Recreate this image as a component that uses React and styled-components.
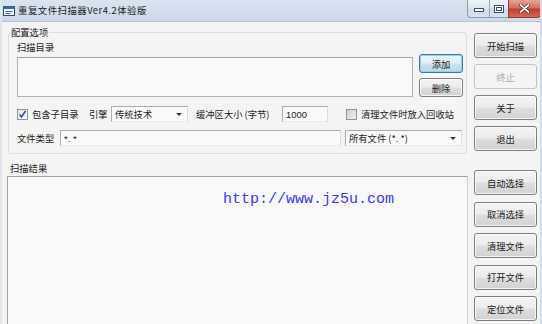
import React from "react";
import styled, { createGlobalStyle, css } from "styled-components";

const GlobalStyle = createGlobalStyle`
  html, body { margin: 0; padding: 0; background: #f4f4f4; }
  body { width: 542px; height: 324px; overflow: hidden; font-family: "Noto Sans CJK SC", "Noto Sans", sans-serif; }
  * { box-sizing: border-box; }
`;

const Window = styled.div`
  width: 542px;
  height: 324px;
  overflow: hidden;
  background: #f4f4f4;
  border-left: 2px solid #dfe6ee;
  border-right: 2px solid #d3dce7;
  display: flex;
  flex-direction: column;
`;

const TitleBar = styled.div`
  height: 22px;
  flex: none;
  display: flex;
  align-items: flex-start;
  background: linear-gradient(to bottom, #dae4f0 0%, #d2deec 55%, #ccd9e9 100%);
  border-bottom: 1px solid #b9c6d6;
  margin: 0 -2px;
  padding-left: 3px;
`;

const AppIcon = styled.svg`
  width: 12px;
  height: 12px;
  margin-top: 5px;
  flex: none;
`;

const Title = styled.div`
  margin-left: 3px;
  margin-top: 4px;
  font-size: 9.4px;
  line-height: 13px;
  color: #1c1c1c;
  letter-spacing: 0.5px;
  white-space: nowrap;
`;

const Controls = styled.div`
  margin-left: auto;
  display: flex;
  align-items: flex-start;
  padding-right: 1px;
`;

const CtrlGroup = styled.div`
  display: flex;
  height: 18px;
  border: 1px solid #8d9db1;
  border-top: none;
  border-right: none;
  border-bottom-left-radius: 4px;
  background: linear-gradient(to bottom, #eef3f8 0%, #dce5ef 50%, #cdd9e6 51%, #d9e3ee 100%);
  overflow: hidden;
`;

const CtrlBtn = styled.div`
  width: ${(p) => p.$w}px;
  height: 17px;
  display: flex;
  align-items: center;
  justify-content: center;
  border-left: ${(p) => (p.$sep ? "1px solid #9aa9bb" : "none")};
`;

const CloseBtn = styled.div`
  width: 33px;
  height: 18px;
  display: flex;
  align-items: center;
  justify-content: center;
  border: 1px solid #8a3a30;
  border-top: none;
  border-bottom-right-radius: 4px;
  background: linear-gradient(to bottom, #e8a493 0%, #d76e5c 45%, #c2402d 55%, #d36b4f 100%);
`;

const Client = styled.div`
  flex: 1;
  display: grid;
  grid-template-columns: 461px 63px;
  column-gap: 6px;
  align-content: start;
  padding: 3px 0 0 5px;
`;

const GroupBox = styled.fieldset`
  margin: 0 1px 0 1px;
  padding: 1px 3px 7px 8px;
  border: 1px solid #d5dfe5;
  border-radius: 3px;
  min-width: 0;
`;

const Legend = styled.legend`
  margin-left: -7px;
  padding: 0 1px;
  font-size: 9.3px;
  line-height: 14px;
  color: #1c1c1c;
`;

const ButtonStack = styled.div`
  display: flex;
  flex-direction: column;
  gap: ${(p) => p.$gap || 6}px;
  margin-top: ${(p) => p.$top}px;
`;

const Btn = styled.button`
  width: ${(p) => p.$w || 63}px;
  height: ${(p) => p.$h || 25}px;
  flex: none;
  padding: 0;
  border: 1px solid #7f7f7f;
  border-radius: 3px;
  background: linear-gradient(to bottom, #f4f4f4 0%, #ececec 48%, #dedede 52%, #d2d2d2 100%);
  box-shadow: inset 0 0 0 1px rgba(255, 255, 255, 0.75);
  font-family: "Noto Sans CJK SC", sans-serif;
  font-size: 9.3px;
  line-height: 12px;
  color: #1c1c1c;
  ${(p) =>
    p.disabled &&
    css`
      border-color: #c2c5c8;
      background: #f4f4f4;
      color: #a8a8a8;
      box-shadow: none;
    `}
  ${(p) =>
    p.$focus &&
    css`
      border-color: #3a78a8;
      box-shadow: inset 0 0 0 1px #8fd1ee;
      background: linear-gradient(to bottom, #eef6fb 0%, #e2eef6 48%, #cfe2ee 52%, #bdd6e6 100%);
    `}
`;

const DirRow = styled.div`
  display: flex;
  align-items: flex-end;
  gap: 6px;
`;

const DirLeft = styled.div`
  display: flex;
  flex-direction: column;
  gap: 3px;
`;

const Label = styled.span`
  font-size: 9.3px;
  line-height: 14px;
  color: #1c1c1c;
  white-space: nowrap;
  flex: none;
  margin-left: ${(p) => p.$ml || 0}px;
  ${(p) => p.$w && `width: ${p.$w}px;`}
`;

const TextArea = styled.div`
  width: 396px;
  height: 40px;
  border: 1px solid #b0b4b8;
  border-top-color: #a4a8ad;
  background: #f9f9f9;
`;

const SideButtons = styled.div`
  display: flex;
  flex-direction: column;
  gap: 5px;
`;

const OptionRow = styled.div`
  display: flex;
  align-items: center;
  height: 16px;
  margin-top: ${(p) => p.$mt}px;
`;

const CheckBox = styled.span`
  width: 11px;
  height: 11px;
  flex: none;
  border: 1px solid #8f9499;
  background: ${(p) =>
    p.$checked
      ? "linear-gradient(135deg, #e0e4e8 0%, #fbfbfb 100%)"
      : "linear-gradient(135deg, #cfd3d7 0%, #eceef0 100%)"};
  display: flex;
  align-items: center;
  justify-content: center;
  margin-left: ${(p) => p.$ml || 0}px;
  margin-right: 4px;
`;

const Select = styled.div`
  width: ${(p) => p.$w}px;
  height: 16px;
  flex: none;
  margin-left: ${(p) => p.$ml || 0}px;
  border: 1px solid #abadb3;
  border-right-color: #dbdfe6;
  border-bottom-color: #e3e9ef;
  background: #fafafa;
  display: flex;
  align-items: center;
  padding: 0 5px 0 3px;
  font-size: 9.3px;
  color: #1c1c1c;
  white-space: pre;
`;

const Arrow = styled.span`
  margin-left: auto;
  width: 0;
  height: 0;
  border-left: 3px solid transparent;
  border-right: 3px solid transparent;
  border-top: 3px solid #2b3a4d;
`;

const Input = styled.div`
  width: ${(p) => p.$w}px;
  height: ${(p) => p.$h || 16}px;
  flex: none;
  margin-left: ${(p) => p.$ml || 0}px;
  border: 1px solid #abadb3;
  border-right-color: #dbdfe6;
  border-bottom-color: #e3e9ef;
  background: #fafafa;
  display: flex;
  align-items: center;
  padding-left: 3px;
  font-family: "Liberation Sans", sans-serif;
  font-size: 9.5px;
  color: #1c1c1c;
  white-space: pre;
`;

const Results = styled.div`
  display: flex;
  flex-direction: column;
  margin-top: 7px;
`;

const ResultLabel = styled.span`
  font-size: 9.3px;
  line-height: 14px;
  color: #1c1c1c;
  margin-left: 3px;
  margin-bottom: 1px;
`;

const ListBox = styled.div`
  height: 170px;
  border: 1px solid #a3a3a3;
  border-right-color: #d0d0d0;
  background: #f9f9f9;
  padding: 7px 0 0 215px;
`;

const Url = styled.span`
  font-family: "Liberation Mono", "DejaVu Sans Mono", monospace;
  font-size: 15px;
  line-height: 18px;
  color: #3737ff;
`;

export default function App() {
  return (
    <>
      <GlobalStyle />
      <Window>
        <TitleBar>
          <AppIcon viewBox="0 0 12 12">
            <rect x="0.5" y="1.5" width="11" height="9" fill="#f4f7fb" stroke="#2f4f78" />
            <rect x="0.5" y="1.5" width="11" height="2.5" fill="#3a6aa8" />
            <path d="M2.5 6.5h7M2.5 8.5h5" stroke="#4a6a90" strokeWidth="1" />
          </AppIcon>
          <Title>重复文件扫描器Ver4.2体验版</Title>
          <Controls>
            <CtrlGroup>
              <CtrlBtn $w={21}>
                <svg width="10" height="6" viewBox="0 0 10 6">
                  <rect x="0.5" y="2.5" width="9" height="3" fill="#fff" stroke="#3b4f66" />
                </svg>
              </CtrlBtn>
              <CtrlBtn $w={19} $sep>
                <svg width="10" height="8" viewBox="0 0 10 8">
                  <rect x="0.5" y="0.5" width="9" height="7" fill="#fff" stroke="#3b4f66" />
                  <rect x="2.5" y="2.5" width="5" height="3" fill="none" stroke="#3b4f66" />
                </svg>
              </CtrlBtn>
            </CtrlGroup>
            <CloseBtn>
              <svg width="11" height="9" viewBox="0 0 11 9">
                <path d="M1.5 1l8 7M9.5 1l-8 7" stroke="#4a1a12" strokeWidth="3" strokeLinecap="round" />
                <path d="M1.5 1l8 7M9.5 1l-8 7" stroke="#ffffff" strokeWidth="1.8" strokeLinecap="round" />
              </svg>
            </CloseBtn>
          </Controls>
        </TitleBar>

        <Client>
          <GroupBox>
            <Legend>配置选项</Legend>
            <DirRow>
              <DirLeft>
                <Label>扫描目录</Label>
                <TextArea />
              </DirLeft>
              <SideButtons>
                <Btn $w={44} $h={19} $focus>添加</Btn>
                <Btn $w={44} $h={19}>删除</Btn>
              </SideButtons>
            </DirRow>

            <OptionRow $mt={9}>
              <CheckBox $checked>
                <svg width="9" height="9" viewBox="0 0 9 9">
                  <path d="M1.5 4.5l2 2.5 4-6" fill="none" stroke="#2c4f8e" strokeWidth="1.6" />
                </svg>
              </CheckBox>
              <Label $w={46}>包含子目录</Label>
              <Label $ml={11} $w={20}>引擎</Label>
              <Select $w={77} $ml={2}>
                传统技术
                <Arrow />
              </Select>
              <Label $ml={8} $w={86}>缓冲区大小 (字节)</Label>
              <Input $w={46}>1000</Input>
              <CheckBox $ml={18} />
              <Label>清理文件时放入回收站</Label>
            </OptionRow>

            <OptionRow $mt={8}>
              <Label $w={43}>文件类型</Label>
              <Input $w={281}>*. *</Input>
              <Select $w={117} $ml={4}>
                所有文件 (*. *)
                <Arrow />
              </Select>
            </OptionRow>
          </GroupBox>

          <ButtonStack $top={8}>
            <Btn>开始扫描</Btn>
            <Btn disabled>终止</Btn>
            <Btn>关于</Btn>
            <Btn>退出</Btn>
          </ButtonStack>

          <Results>
            <ResultLabel>扫描结果</ResultLabel>
            <ListBox>
              <Url>http://www.jz5u.com</Url>
            </ListBox>
          </Results>

          <ButtonStack $top={16} $gap={6.5}>
            <Btn>自动选择</Btn>
            <Btn>取消选择</Btn>
            <Btn>清理文件</Btn>
            <Btn>打开文件</Btn>
            <Btn>定位文件</Btn>
          </ButtonStack>
        </Client>
      </Window>
    </>
  );
}
